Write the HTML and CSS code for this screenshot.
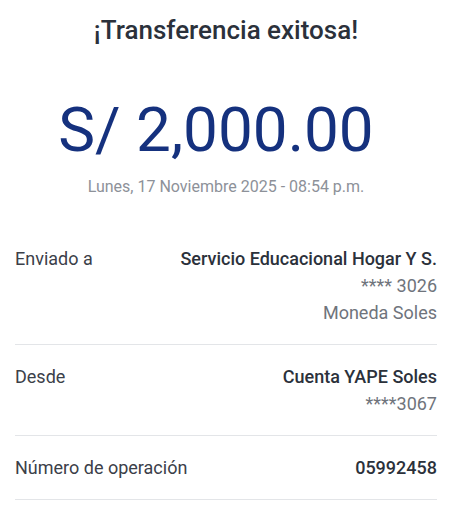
FILE: index.html
```html
<!DOCTYPE html>
<html lang="es">
<head>
  <meta charset="UTF-8">
  <meta name="viewport" content="width=device-width, initial-scale=1.0">
  <title>Transferencia exitosa</title>
  <link rel="stylesheet" href="styles.css">
</head>
<body>

<div class="receipt">
  <h1 class="title">¡Transferencia exitosa!</h1>

  <p class="amount">S/ 2,000.00</p>
  <p class="date">Lunes, 17 Noviembre 2025 - 08:54 p.m.</p>

  <div class="details">
    <div class="row">
      <span class="label">Enviado a</span>
      <div class="value">
        <strong>Servicio Educacional Hogar Y S.</strong>
        <span>**** 3026</span>
        <span>Moneda Soles</span>
      </div>
    </div>
    <div class="row">
      <span class="label">Desde</span>
      <div class="value">
        <strong>Cuenta YAPE Soles</strong>
        <span>****3067</span>
      </div>
    </div>
    <div class="row">
      <span class="label">Número de operación</span>
      <div class="value">
        <strong>05992458</strong>
      </div>
    </div>
  </div>
</div>

</body>
</html>
```

FILE: styles.css
```css
:root {
  --navy: #15317e;
  --ink: #2b313b;
  --text: #3b4049;
  --grey: #6f747c;
  --grey-light: #8d9199;
  --line: #e3e5e8;
  --white: #ffffff;
}
body {
  font-family: Roboto, 'Noto Sans', sans-serif;
  background-color: var(--white);
  color: var(--text);
  margin: 0;
  padding: 0;
}
.receipt {
  padding: 14px 21px 0 15px;
}
.title {
  margin: 0;
  text-align: center;
  font-size: 26px;
  font-weight: 500;
  line-height: 32px;
  color: var(--ink);
}
.amount {
  margin: 49px 0 0;
  padding-right: 20px;
  text-align: center;
  font-size: 62px;
  font-weight: 400;
  line-height: 70px;
  color: var(--navy);
}
.date {
  margin: 12px 0 0;
  text-align: center;
  font-size: 16px;
  line-height: 20px;
  color: var(--grey-light);
}
.details {
  margin-top: 30px;
}
.row {
  display: flex;
  justify-content: space-between;
  padding: 19px 0 18px;
  border-bottom: 1px solid var(--line);
  font-size: 18px;
  line-height: 26px;
}
.label {
  color: var(--text);
}
.value {
  display: flex;
  flex-direction: column;
  align-items: flex-end;
  color: var(--grey);
}
.value span {
  line-height: 27px;
}
.value strong {
  font-weight: 500;
  color: var(--ink);
}
```
